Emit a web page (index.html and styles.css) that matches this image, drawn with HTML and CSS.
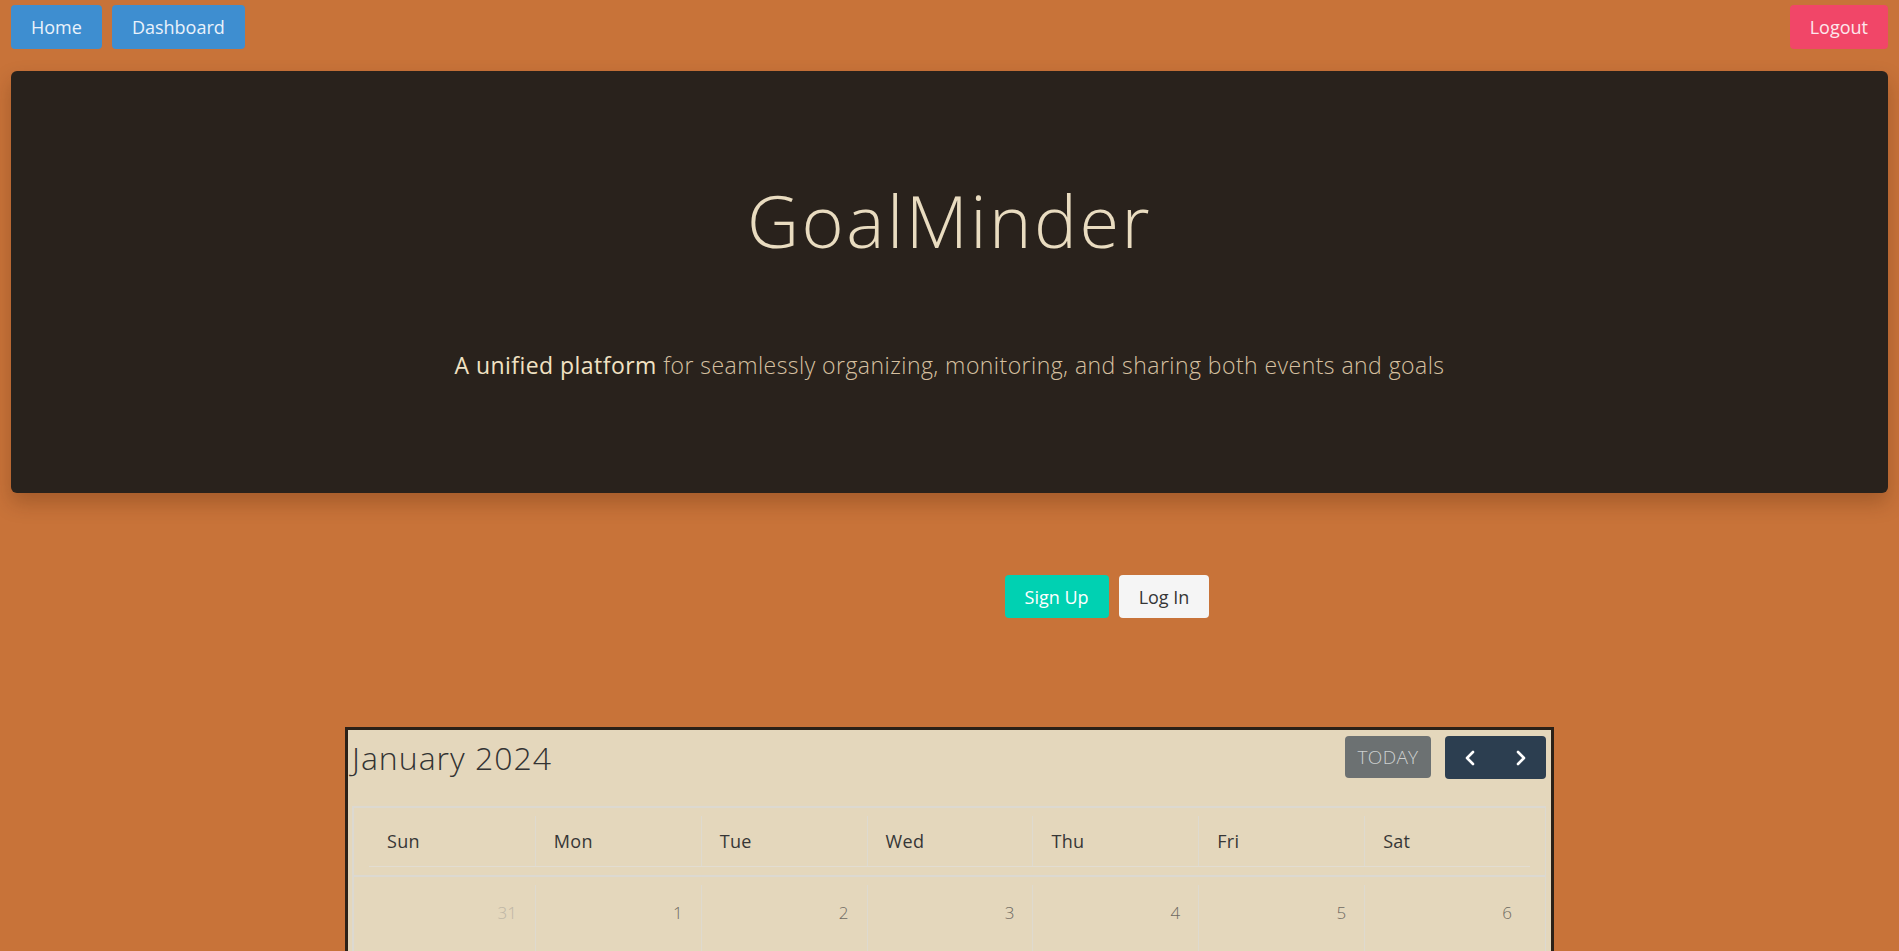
FILE: index.html
```html
<!DOCTYPE html>
<html lang="en">
<head>
<meta charset="utf-8">
<title>GoalMinder</title>
<link rel="stylesheet" href="styles.css">
</head>
<body>
<nav class="nav">
  <div class="nav-left">
    <a class="btn btn-info">Home</a>
    <a class="btn btn-info">Dashboard</a>
  </div>
  <a class="btn btn-danger">Logout</a>
</nav>

<section class="hero">
  <h1 class="hero-title">GoalMinder</h1>
  <p class="hero-sub"><strong>A unified platform</strong> for seamlessly organizing, monitoring, and sharing both events and goals</p>
</section>

<div class="auth">
  <a class="btn btn-primary">Sign Up</a>
  <a class="btn btn-light">Log In</a>
</div>

<div class="calendar">
  <div class="cal-toolbar">
    <h2 class="cal-title">January 2024</h2>
    <div class="cal-actions">
      <button class="cal-today">TODAY</button>
      <div class="cal-nav">
        <button class="cal-arrow" aria-label="prev"><svg width="12" height="16" viewBox="0 0 12 16"><polyline points="9,2 3,8 9,14" fill="none" stroke="#fff" stroke-width="2.6" stroke-linecap="round" stroke-linejoin="round"/></svg></button>
        <button class="cal-arrow" aria-label="next"><svg width="12" height="16" viewBox="0 0 12 16"><polyline points="3,2 9,8 3,14" fill="none" stroke="#fff" stroke-width="2.6" stroke-linecap="round" stroke-linejoin="round"/></svg></button>
      </div>
    </div>
  </div>
  <div class="cal-table">
    <div class="cal-head">
      <div class="cal-row">
        <div class="cal-hcell"><span>Sun</span></div>
        <div class="cal-hcell"><span>Mon</span></div>
        <div class="cal-hcell"><span>Tue</span></div>
        <div class="cal-hcell"><span>Wed</span></div>
        <div class="cal-hcell"><span>Thu</span></div>
        <div class="cal-hcell"><span>Fri</span></div>
        <div class="cal-hcell"><span>Sat</span></div>
      </div>
    </div>
    <div class="cal-body">
      <div class="cal-row">
        <div class="cal-day other"><span>31</span></div>
        <div class="cal-day"><span>1</span></div>
        <div class="cal-day"><span>2</span></div>
        <div class="cal-day"><span>3</span></div>
        <div class="cal-day"><span>4</span></div>
        <div class="cal-day"><span>5</span></div>
        <div class="cal-day"><span>6</span></div>
      </div>
    </div>
  </div>
</div>
</body>
</html>
```

FILE: styles.css
```css
* { box-sizing: border-box; }

body {
  margin: 0;
  background: #c87339;
  font-family: "Open Sans", "Liberation Sans", sans-serif;
  color: #363636;
}

.nav {
  display: flex;
  justify-content: space-between;
  align-items: flex-start;
  padding: 5px 11px 0;
}

.nav-left { display: flex; gap: 10px; }

.btn {
  display: inline-flex;
  align-items: center;
  justify-content: center;
  height: 44px;
  padding: 0 20px;
  border-radius: 4px;
  font-size: 18px;
  font-weight: 400;
  cursor: pointer;
  text-decoration: none;
}

.btn-info { background: #3e8ed0; color: #eaf2fb; }
.btn-danger { background: #f14668; color: #fde8ec; }
.btn-primary { background: #00d1b2; color: #fff; font-weight: 500; height: 43px; }
.btn-light { background: #f5f5f5; color: #363636; height: 43px; }

.hero {
  margin: 22px 11px 0;
  height: 422px;
  background: #29221c;
  border-radius: 6px;
  box-shadow: 0 10px 20px rgba(60, 25, 0, 0.25);
  text-align: center;
  padding-top: 113px;
}

.hero-title {
  margin: 0;
  font-size: 72px;
  line-height: 72px;
  font-weight: 300;
  letter-spacing: 2.5px;
  color: #e9dcc0;
}

.hero-sub {
  margin: 93px 0 0;
  font-size: 23px;
  line-height: 32px;
  font-weight: 300;
  letter-spacing: 0.45px;
  color: #d6c0a0;
}

.hero-sub strong { font-weight: 500; color: #f1e2c4; }

.auth {
  display: flex;
  justify-content: center;
  gap: 10px;
  padding-left: 315px;
  margin-top: 82px;
}

.calendar {
  width: 1209px;
  margin: 109px auto 0;
  background: #e4d7bc;
  border: 3px solid #2b2118;
  border-bottom: none;
  padding: 6px 5px 0 4px;
}

.cal-toolbar {
  display: flex;
  justify-content: space-between;
  align-items: flex-start;
  margin-bottom: 27px;
}

.cal-title {
  margin: 0;
  font-size: 32px;
  font-weight: 300;
  letter-spacing: 1px;
  line-height: 43px;
  color: #333;
}

.cal-actions { display: flex; gap: 14px; }

.cal-today {
  height: 42px;
  width: 86px;
  border: none;
  border-radius: 4px;
  background: #6c7172;
  color: #cdd0d0;
  font-family: inherit;
  font-size: 19px;
  font-weight: 300;
  letter-spacing: 0.3px;
}

.cal-nav {
  display: flex;
  height: 43px;
  width: 101px;
  background: #2c3e50;
  border-radius: 4px;
}

.cal-arrow {
  flex: 1;
  border: none;
  background: transparent;
  display: flex;
  align-items: center;
  justify-content: center;
  padding: 0;
}

.cal-table {
  border: 2px solid #dcd9d1;
  border-bottom: none;
  border-right-width: 1px;
}

.cal-head {
  padding: 8px 15px 8px;
  border-bottom: 2px solid #dcd9d1;
}

.cal-row {
  display: grid;
  grid-template-columns: repeat(7, 1fr);
}

.cal-head .cal-row { border-bottom: 1px solid #e2ddd2; }

.cal-hcell {
  height: 50px;
  display: flex;
  align-items: center;
  padding-left: 18px;
  font-size: 18px;
  letter-spacing: 0.3px;
  color: #363636;
}

.cal-hcell + .cal-hcell { border-left: 1px solid #dedacf; }

.cal-body { padding: 8px 15px 0; }

.cal-day {
  height: 120px;
  padding: 16px 18px 0 0;
  text-align: right;
  font-size: 17px;
  font-weight: 300;
  color: #6e6a62;
}

.cal-day:not(:nth-child(7n+1)) { border-left: 1px solid #dedacf; }

.cal-day.other { color: #bdb5a5; }
```
